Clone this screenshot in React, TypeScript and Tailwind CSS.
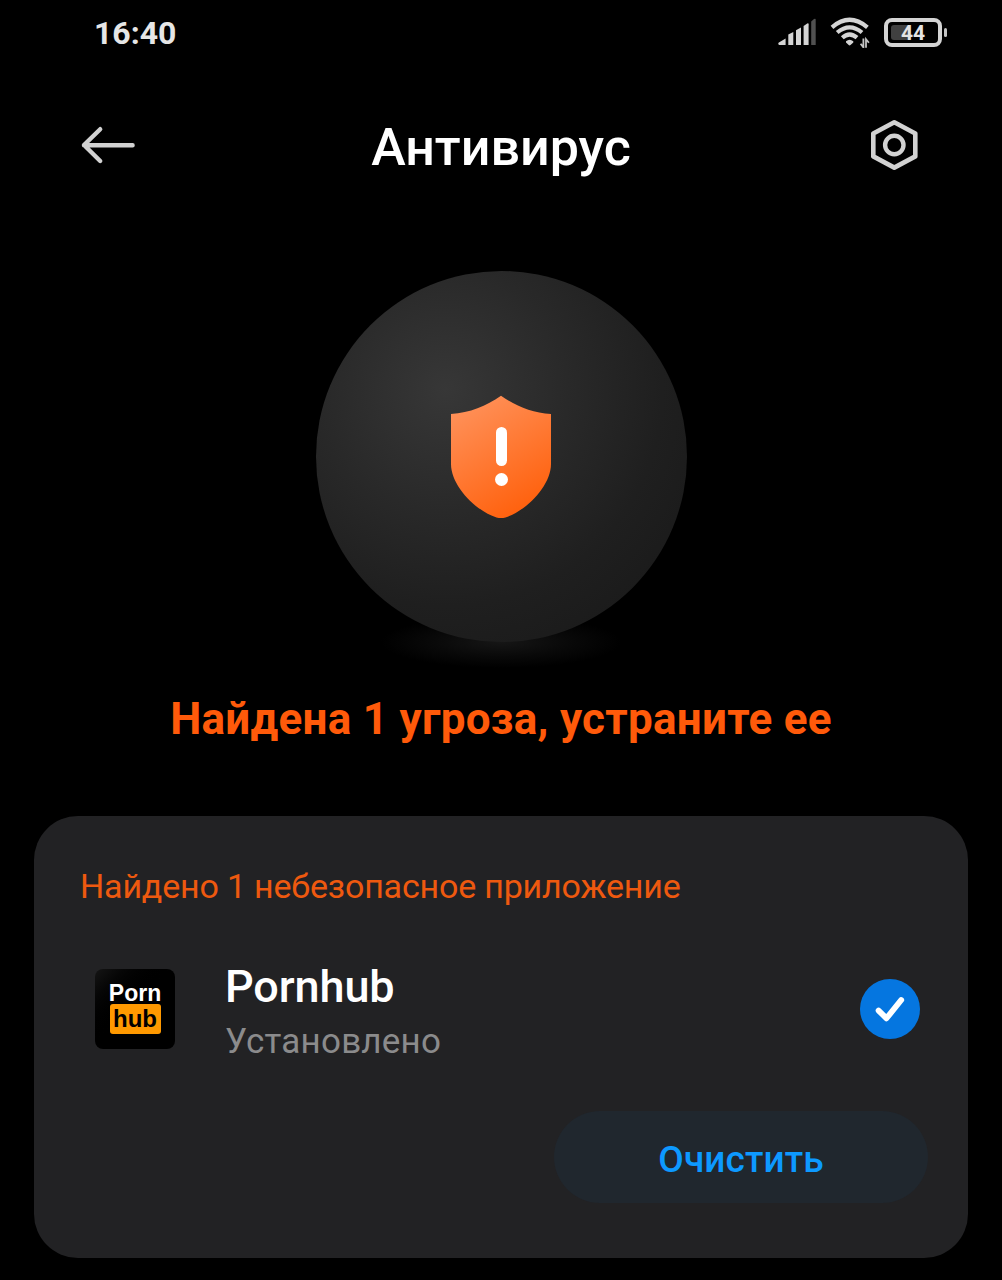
import React, { useState } from 'react';

function SignalIcon() {
  return (
    <svg className="h-7 w-10" viewBox="0 0 40 28" aria-hidden="true">
      <g fill="#d4d4d4">
        <path d="M1.5 27a1.3 1.3 0 0 1-.6-2.4L7.6 20.6V27z" />
        <path d="M10.3 16.6l5-2.7V27h-5z" />
        <path d="M18 12.2l5-2.8V27h-5z" />
        <path d="M25.6 8l3.6-2.6q1.4-.8 1.4.8V27h-5z" />
      </g>
      <path d="M33.2 3.4l2.8-2.4q1.7-1 1.7.8V27h-4.5z" fill="#505050" />
    </svg>
  );
}

function WifiIcon() {
  return (
    <svg className="h-8 w-10" viewBox="0 0 40 32" fill="none" aria-hidden="true">
      <g stroke="#d4d4d4" strokeWidth="4.2">
        <path d="M2 11.3Q19.5 -3.7 37.4 11.3" />
        <path d="M7.2 16.5Q19.6 6.3 32 16.5" />
        <path d="M12.3 21.7Q19.6 15.2 27 21.7" />
      </g>
      <path d="M16 25.2q3.6-3 7.3 0v1.3l-2.8 2.6q-.9.7-1.8 0L16 26.5z" fill="#d4d4d4" />
      <path
        d="M33.4 22.6v8.8l-2.8-3.6M36 31.8v-8.6l2.9 3.5"
        stroke="#c4c4c4"
        strokeWidth="1.8"
      />
    </svg>
  );
}

function Battery({ level }: { level: number }) {
  return (
    <div className="flex items-center gap-[2px]">
      <div className="relative flex h-[29px] w-[58px] items-center justify-center rounded-[8px] border-4 border-[#d4d4d4]">
        <div
          className="absolute top-[3px] bottom-[3px] left-[3px] rounded-[3px] bg-[#404040]"
          style={{ width: `${level * 0.86}%` }}
        />
        <span className="relative pt-[2px] text-[21px] leading-none font-bold text-[#e4e4e4]">{level}</span>
      </div>
      <div className="h-[9px] w-[3px] rounded-full bg-[#c4c4c4]" />
    </div>
  );
}

function StatusBar() {
  return (
    <div className="flex h-16 items-center justify-between pr-[55px] pl-[94px]">
      <span className="pt-px text-[32px] leading-none font-bold text-[#e6e6e6]">16:40</span>
      <div className="flex items-center">
        <SignalIcon />
        <div className="mr-[14px] ml-3">
          <WifiIcon />
        </div>
        <Battery level={44} />
      </div>
    </div>
  );
}

function Header() {
  return (
    <header className="flex h-[162px] items-center justify-between pr-[82px] pl-20">
      <button type="button" aria-label="Назад">
        <svg className="h-10 w-14" viewBox="0 0 56 40" fill="none" aria-hidden="true">
          <path
            d="M20.2 4.2L4 20l16.2 16M4 20.3h48.6"
            stroke="#d2d2d2"
            strokeWidth="4.4"
            strokeLinecap="round"
            strokeLinejoin="round"
          />
        </svg>
      </button>
      <h1 className="pt-[6px] pr-[2px] text-[52px] leading-[60px] font-medium text-white">Антивирус</h1>
      <button type="button" aria-label="Настройки">
        <svg className="h-[52px] w-[52px]" viewBox="0 0 52 52" fill="none" aria-hidden="true">
          <path
            d="M26.3 3.2L47.3 14.6V37.4L26.3 48.6L5.3 37.4V14.6z"
            stroke="#d2d2d2"
            strokeWidth="4.6"
            strokeLinejoin="round"
          />
          <circle cx="26.3" cy="26" r="9.2" stroke="#d2d2d2" strokeWidth="4.4" />
        </svg>
      </button>
    </header>
  );
}

function ThreatBadge() {
  return (
    <div className="relative mt-[45px] h-[371px] w-[371px]">
      <div className="absolute -bottom-[26px] left-[65px] h-[52px] w-60 bg-[radial-gradient(closest-side,#161616,#090909_55%,transparent)]" />
      <div className="relative flex h-full w-full items-center justify-center rounded-full bg-[radial-gradient(circle_at_35%_32%,#373737_0%,#292929_35%,#1f1f1f_62%,#1b1b1b_80%)]">
        <svg className="h-[124px] w-[102px]" viewBox="0 0 102 124" aria-hidden="true">
          <defs>
            <linearGradient id="shield" x1="0.2" y1="0.05" x2="0.65" y2="0.95">
              <stop offset="0" stopColor="#ff9058" />
              <stop offset="1" stopColor="#ff620f" />
            </linearGradient>
          </defs>
          <path
            d="M51 .8C66 11 82 18 101 19V69C101 91 76 116 55.5 122.4Q51 123.8 46.5 122.4C26 116 1 91 1 69V19C20 18 36 11 51 .8z"
            fill="url(#shield)"
          />
          <rect x="46" y="32" width="11" height="39" rx="5.5" fill="#fff" />
          <circle cx="51.5" cy="84.5" r="6.5" fill="#fff" />
        </svg>
      </div>
    </div>
  );
}

function AppIcon() {
  return (
    <div className="mt-[11px] flex h-20 w-20 flex-col items-center rounded-[8px] bg-gradient-to-br from-[#151515] to-black to-50% pt-[13px] font-['Liberation_Sans',sans-serif] font-bold">
      <span className="text-[23px] leading-[22px] text-white">Porn</span>
      <span className="flex h-[30px] w-[51px] items-center justify-center rounded-[3px] bg-[#ff9900] text-[24px] leading-none text-black">
        hub
      </span>
    </div>
  );
}

function App() {
  const [checked, setChecked] = useState(true);

  return (
    <div className="flex h-[1280px] w-[1002px] flex-col overflow-hidden bg-black font-[Roboto,sans-serif]">
      <StatusBar />
      <Header />

      <main className="flex flex-col items-center">
        <ThreatBadge />
        <h2 className="mt-[47px] text-[44px] leading-[60px] font-bold tracking-[0.28px] whitespace-nowrap text-[#ff5a0a]">
          Найдена 1 угроза, устраните ее
        </h2>

        <section className="mt-[67px] h-[442px] w-[934px] rounded-[44px] bg-[#222224] pt-[50px] pr-10 pl-[46px]">
          <p className="text-[34px] leading-10 tracking-[-0.18px] whitespace-nowrap text-[#ee590f]">
            Найдено 1 небезопасное приложение
          </p>

          <div className="mt-[52px] flex items-start pr-2 pl-[15px]">
            <AppIcon />
            <div className="ml-[50px] flex-1">
              <p className="pt-px text-[45px] leading-[56px] font-medium tracking-[-0.1px] text-white">Pornhub</p>
              <p className="text-[35px] leading-[54px] tracking-[0.2px] text-[#8b8b8c]">Установлено</p>
            </div>
            <button
              type="button"
              role="checkbox"
              aria-checked={checked}
              aria-label="Pornhub"
              onClick={() => setChecked(!checked)}
              className="mt-[21px] flex h-[60px] w-[60px] items-center justify-center rounded-full bg-[#0576e0]"
            >
              {checked && (
                <svg className="h-[60px] w-[60px]" viewBox="0 0 60 60" fill="none" aria-hidden="true">
                  <path
                    d="M18.6 31.6L26.5 39.3L41.2 21"
                    stroke="#fff"
                    strokeWidth="5.8"
                    strokeLinecap="round"
                    strokeLinejoin="round"
                  />
                </svg>
              )}
            </button>
          </div>

          <div className="mt-[42px] flex justify-end">
            <button
              type="button"
              className="h-[92px] w-[374px] rounded-full bg-[#20272e] pt-[5px] text-[37px] font-medium tracking-[0.1px] text-[#0d99ff]"
            >
              Очистить
            </button>
          </div>
        </section>
      </main>
    </div>
  );
}

export default App;
